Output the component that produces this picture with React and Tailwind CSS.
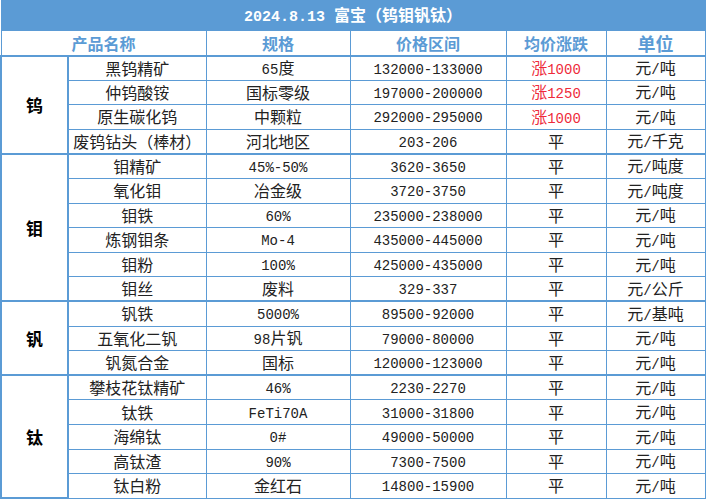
import React from 'react'

const groups = [
  {
    name: '钨',
    rows: [
      ['黑钨精矿', '65度', '132000-133000', '涨1000', '元/吨'],
      ['仲钨酸铵', '国标零级', '197000-200000', '涨1250', '元/吨'],
      ['原生碳化钨', '中颗粒', '292000-295000', '涨1000', '元/吨'],
      ['废钨钻头（棒材）', '河北地区', '203-206', '平', '元/千克'],
    ],
  },
  {
    name: '钼',
    rows: [
      ['钼精矿', '45%-50%', '3620-3650', '平', '元/吨度'],
      ['氧化钼', '冶金级', '3720-3750', '平', '元/吨度'],
      ['钼铁', '60%', '235000-238000', '平', '元/吨'],
      ['炼钢钼条', 'Mo-4', '435000-445000', '平', '元/吨'],
      ['钼粉', '100%', '425000-435000', '平', '元/吨'],
      ['钼丝', '废料', '329-337', '平', '元/公斤'],
    ],
  },
  {
    name: '钒',
    rows: [
      ['钒铁', '5000%', '89500-92000', '平', '元/基吨'],
      ['五氧化二钒', '98片钒', '79000-80000', '平', '元/吨'],
      ['钒氮合金', '国标', '120000-123000', '平', '元/吨'],
    ],
  },
  {
    name: '钛',
    rows: [
      ['攀枝花钛精矿', '46%', '2230-2270', '平', '元/吨'],
      ['钛铁', 'FeTi70A', '31000-31800', '平', '元/吨'],
      ['海绵钛', '0#', '49000-50000', '平', '元/吨'],
      ['高钛渣', '90%', '7300-7500', '平', '元/吨'],
      ['钛白粉', '金红石', '14800-15900', '平', '元/吨'],
    ],
  },
]

const cjk = { fontFamily: '"Noto Sans CJK SC", sans-serif' }
const mono = { fontFamily: '"Liberation Mono", "Noto Sans CJK SC", monospace' }

// split text so ascii runs get the narrow mono face, like SimSun half-width digits
function Mixed({ text }) {
  const parts = text.match(/[\x20-\x7e]+|[^\x20-\x7e]+/g) || []
  return parts.map((p, i) =>
    /^[\x20-\x7e]+$/.test(p) ? (
      <span key={i} className="text-[14px]" style={mono}>{p}</span>
    ) : (
      <span key={i} className="text-[16px]" style={cjk}>{p}</span>
    )
  )
}

const cell = 'border-[1.5px] border-[#5b9bd5] text-center p-0 leading-none'

export default function App() {
  return (
    <div className="w-[706px] h-[500px] bg-white overflow-hidden">
      <table className="w-[704px] table-fixed border-collapse">
        <colgroup>
          <col className="w-[67px]" />
          <col className="w-[138px]" />
          <col className="w-[144px]" />
          <col className="w-[156px]" />
          <col className="w-[100px]" />
          <col className="w-[99px]" />
        </colgroup>
        <thead>
          <tr className="h-[30px]">
            <th colSpan={6} className="bg-[#5b9bd5] text-white text-center p-0 border-[1.5px] border-[#5b9bd5]">
              <span className="text-[15px] font-bold" style={mono}>2024.8.13 </span>
              <span className="text-[16px] font-bold" style={cjk}>富宝（钨钼钒钛）</span>
            </th>
          </tr>
          <tr className="h-[25px] text-[#5b9bd5]">
            <th colSpan={2} className={cell + ' text-[16px] font-semibold'} style={cjk}>产品名称</th>
            <th className={cell + ' text-[16px] font-semibold'} style={cjk}>规格</th>
            <th className={cell + ' text-[16px] font-semibold'} style={cjk}>价格区间</th>
            <th className={cell + ' text-[16px] font-semibold'} style={cjk}>均价涨跌</th>
            <th className={cell + ' text-[18px] font-bold'} style={cjk}>单位</th>
          </tr>
        </thead>
        <tbody>
          {groups.map((g) =>
            g.rows.map((r, i) => (
              <tr key={g.name + i} className="h-[24.6px] text-[#222]">
                {i === 0 && (
                  <td
                    rowSpan={g.rows.length}
                    className={cell + ' border-[2px] text-[17px] font-bold text-black'}
                    style={cjk}
                  >
                    {g.name}
                  </td>
                )}
                {r.map((v, j) => (
                  <td
                    key={j}
                    className={
                      cell +
                      (i === 0 ? ' border-t-[2px]' : '') +
                      (j === 3 && v !== '平' ? ' text-[#ee2a3a]' : '')
                    }
                  >
                    <Mixed text={v} />
                  </td>
                ))}
              </tr>
            ))
          )}
        </tbody>
      </table>
    </div>
  )
}
